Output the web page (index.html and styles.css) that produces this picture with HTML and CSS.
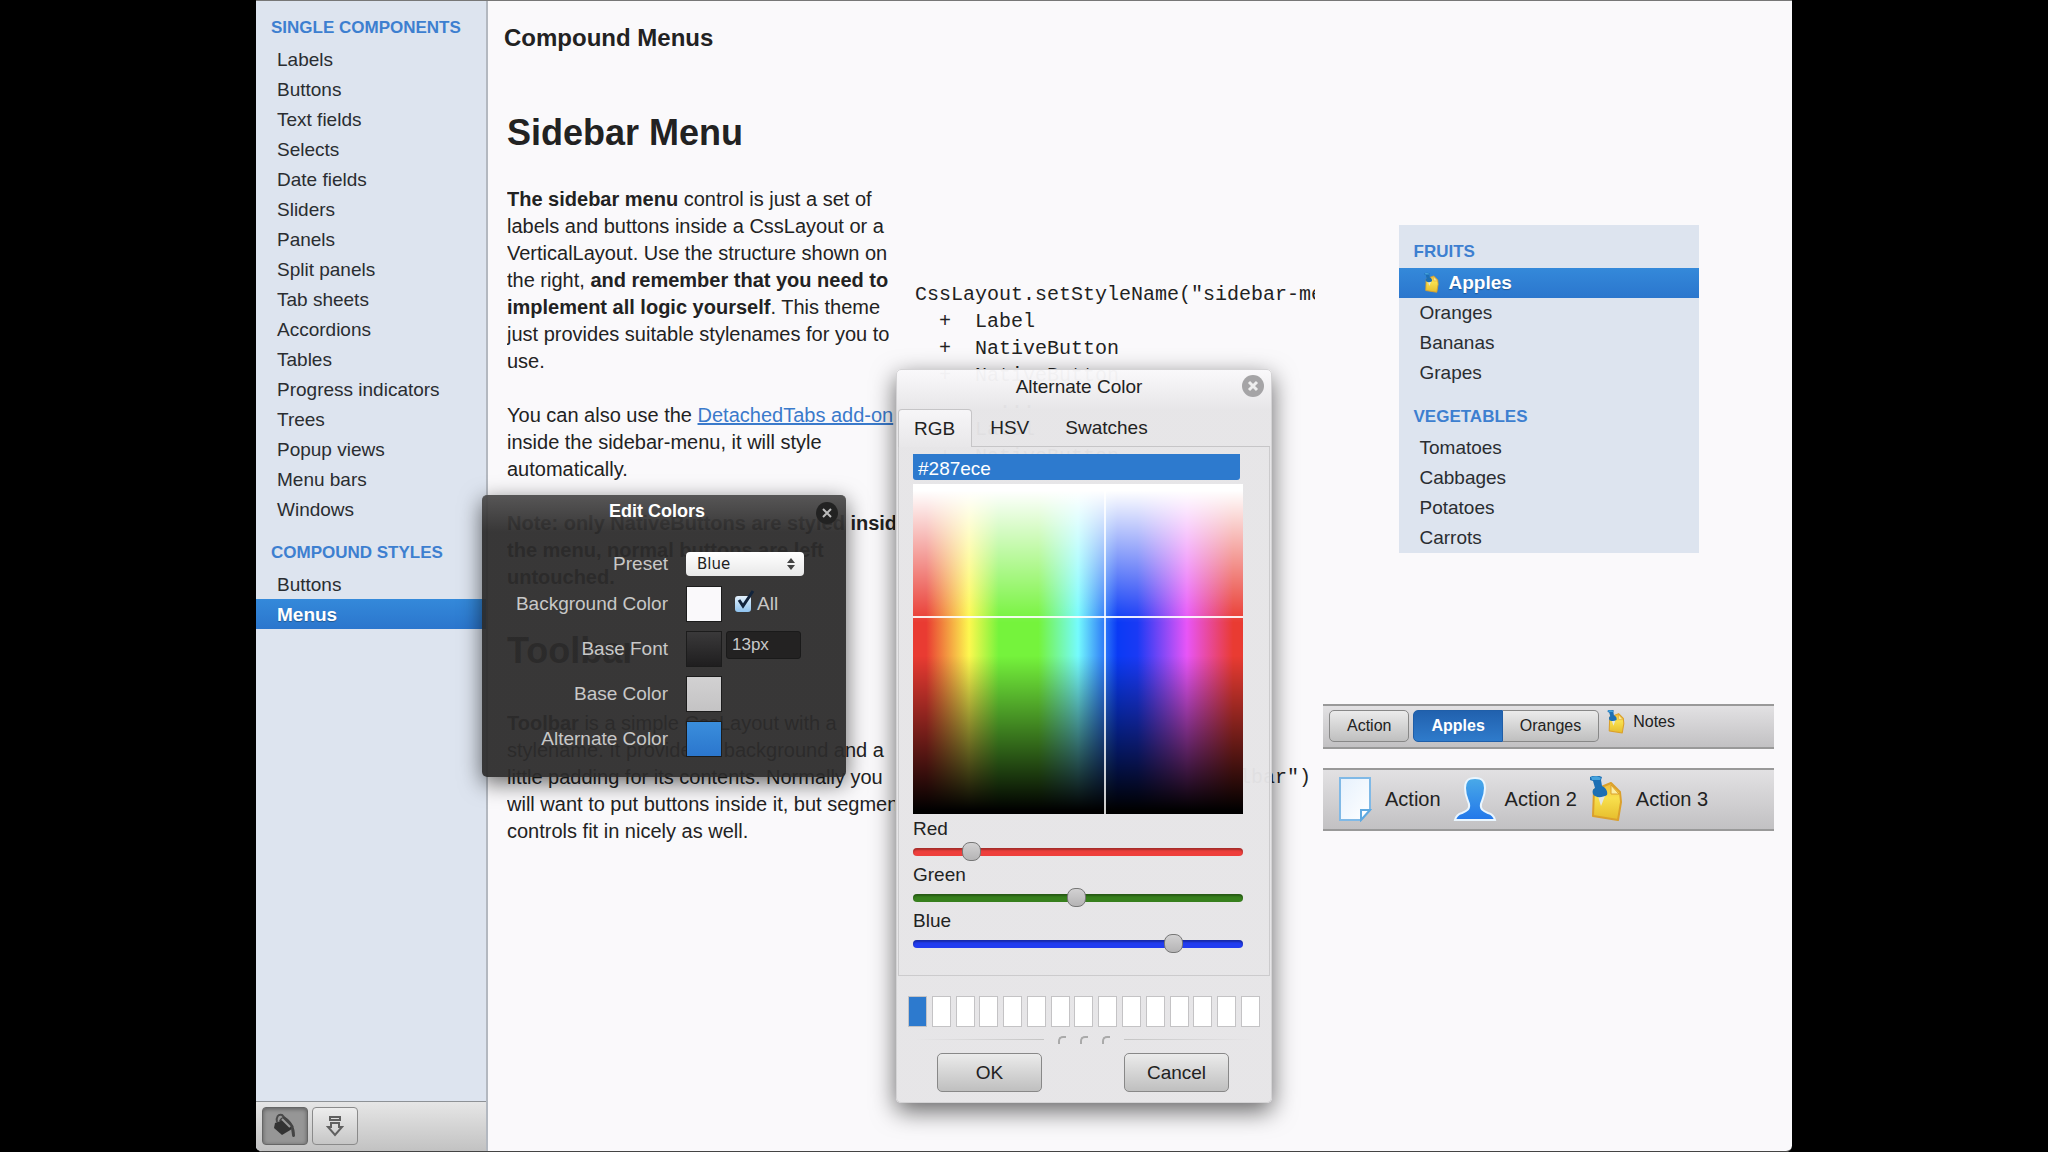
FILE: index.html
```html
<!DOCTYPE html>
<html lang="en">
<head>
    <meta charset="UTF-8">
    <meta name="viewport" content="width=device-width, initial-scale=1.0">
    <title>Compound Menus</title>
    <link rel="stylesheet" href="styles.css">
</head>
<body>

<!-- Shared icons -->
<svg class="defs" width="0" height="0" aria-hidden="true">
    <defs>
        <linearGradient id="gold" x1="0" y1="0" x2="0" y2="1">
            <stop offset="0" stop-color="#f0b93a"/>
            <stop offset="0.4" stop-color="#f8e04e"/>
            <stop offset="1" stop-color="#e6bd2c"/>
        </linearGradient>
        <linearGradient id="sky" x1="0" y1="0" x2="0" y2="1">
            <stop offset="0" stop-color="#4aaae8"/>
            <stop offset="1" stop-color="#2277ea"/>
        </linearGradient>
        <linearGradient id="paper" x1="0" y1="0" x2="1" y2="1">
            <stop offset="0" stop-color="#e6f1fd"/>
            <stop offset="1" stop-color="#ffffff"/>
        </linearGradient>
        <symbol id="note" viewBox="0 0 34 46">
            <path d="M5 14 L22 7 L31 16 L32 26 L29 44 L4 40 Z" fill="url(#gold)" stroke="#dba02c" stroke-width="2" stroke-linejoin="round"/>
            <path d="M22 9 L22 18 L30 18 Z" fill="#fbeea2" stroke="#dba02c"/>
            <path d="M8 17 L16 20 L12 30 Z" fill="#e4e6e2"/>
            <path d="M1 1 C5 -1 9 -1 13 1 L12 4 L13 10 C17 12 19 15 18 19 C13 22 6 22 4 18 C3 15 4 13 6 12 L4 5 L1 4 Z" fill="#1d6fb4"/>
            <path d="M2 1 C6 0 9 0 12 2 L11 4 L3 4 Z" fill="#45a2dc"/>
        </symbol>
    </defs>
</svg>

<div class="app">

    <aside class="sidebar">
        <nav class="sidebar-menu">
            <h4>SINGLE COMPONENTS</h4>
            <a href="#">Labels</a>
            <a href="#">Buttons</a>
            <a href="#">Text fields</a>
            <a href="#">Selects</a>
            <a href="#">Date fields</a>
            <a href="#">Sliders</a>
            <a href="#">Panels</a>
            <a href="#">Split panels</a>
            <a href="#">Tab sheets</a>
            <a href="#">Accordions</a>
            <a href="#">Tables</a>
            <a href="#">Progress indicators</a>
            <a href="#">Trees</a>
            <a href="#">Popup views</a>
            <a href="#">Menu bars</a>
            <a href="#">Windows</a>
            <h4>COMPOUND STYLES</h4>
            <a href="#">Buttons</a>
            <a href="#" class="selected">Menus</a>
        </nav>
        <div class="bottom-bar">
            <button type="button" class="icon-button pressed" aria-label="Edit colors">
                <svg width="24" height="26" viewBox="0 0 24 26">
                    <path d="M2 10 L13 6 L19 16 L9 22 L1 15 Z" fill="#333"/>
                    <path d="M4 9 C3 4 5 1 9 2 L20 14" fill="none" stroke="#4a4a4a" stroke-width="2"/>
                    <path d="M6 8 C8 3 12 3 15 6 C19 10 22 14 22 23 C21 25 19 24 19 22 L18 15 L12 8 Z" fill="#444"/>
                    <path d="M9 6 L17 14" stroke="#999" stroke-width="2"/>
                </svg>
            </button>
            <button type="button" class="icon-button" aria-label="Download">
                <svg width="18" height="22" viewBox="0 0 18 22" fill="none" stroke="#606060" stroke-width="2">
                    <rect x="4" y="2" width="10" height="3"/>
                    <path d="M5 8 H13 V12 H16 L9 20 L2 12 H5 Z"/>
                </svg>
            </button>
        </div>
    </aside>

    <main class="content">
        <h1>Compound Menus</h1>

        <h2>Sidebar Menu</h2>
        <div class="row">
            <div class="text">
                <b>The sidebar menu</b> control is just a set of<br>
                labels and buttons inside a CssLayout or a<br>
                VerticalLayout. Use the structure shown on<br>
                the right, <b>and remember that you need to<br>
                implement all logic yourself</b>. This theme<br>
                just provides suitable stylenames for you to<br>
                use.<br>
                <br>
                You can also use the <a href="#">DetachedTabs add-on</a><br>
                inside the sidebar-menu, it will style<br>
                automatically.<br>
                <br>
                <b>Note: only NativeButtons are styled inside<br>
                the menu, normal buttons are left<br>
                untouched.</b>
            </div>
<pre class="code">CssLayout.setStyleName("sidebar-menu")
  +  Label
  +  NativeButton
  +  NativeButton
       ...
  +  Label
  +  NativeButton
       ...</pre>
            <div class="demo">
                <nav class="sidebar-menu fruit-menu">
                    <h4>FRUITS</h4>
                    <a href="#" class="selected"><svg class="note-small" width="15" height="22"><use href="#note"/></svg>Apples</a>
                    <a href="#">Oranges</a>
                    <a href="#">Bananas</a>
                    <a href="#">Grapes</a>
                    <h4>VEGETABLES</h4>
                    <a href="#">Tomatoes</a>
                    <a href="#">Cabbages</a>
                    <a href="#">Potatoes</a>
                    <a href="#">Carrots</a>
                </nav>
            </div>
        </div>

        <h2>Toolbar</h2>
        <div class="row">
            <div class="text">
                <b>Toolbar</b> is a simple CssLayout with a<br>
                stylename. It provides a background and a<br>
                little padding for its contents. Normally you<br>
                will want to put buttons inside it, but segment<br>
                controls fit in nicely as well.
            </div>
<pre class="code">CssLayout.setStyleName("toolbar")</pre>
            <div class="toolbars">
                <div class="toolbar">
                    <button type="button" class="button">Action</button>
                    <div class="segment">
                        <button type="button" class="button down">Apples</button>
                        <button type="button" class="button">Oranges</button>
                    </div>
                    <button type="button" class="link-button">
                        <svg width="18" height="24"><use href="#note"/></svg>
                        Notes
                    </button>
                </div>
                <div class="toolbar big">
                    <button type="button" class="link-button">
                        <svg width="34" height="46" viewBox="0 0 34 46">
                            <path d="M2 2 H32 V34 L23 44 H2 Z" fill="url(#paper)" stroke="#80b9e6" stroke-width="2"/>
                            <path d="M23 44 V34 H32 Z" fill="#fff" stroke="#5fa9e0" stroke-width="2"/>
                        </svg>
                        Action
                    </button>
                    <button type="button" class="link-button">
                        <svg width="44" height="46" viewBox="0 0 44 46">
                            <path d="M22 2 C30 2 32 6 32 12 C32 20 29 24 28 28 C27 33 30 35 35 37 C39 38 41 40 42 44 H2 C3 40 5 38 9 37 C14 35 17 33 16 28 C15 24 12 20 12 12 C12 6 14 2 22 2 Z" fill="url(#sky)" stroke="#eaf6ff" stroke-width="2"/>
                        </svg>
                        Action 2
                    </button>
                    <button type="button" class="link-button">
                        <svg width="34" height="46"><use href="#note"/></svg>
                        Action 3
                    </button>
                </div>
            </div>
        </div>
    </main>

    <!-- Edit Colors window -->
    <form class="window dark">
        <h3>Edit Colors</h3>
        <button type="button" class="close" aria-label="Close">
            <svg width="12" height="12" viewBox="0 0 12 12"><path d="M2 2 L10 10 M10 2 L2 10" stroke="currentColor" stroke-width="2"/></svg>
        </button>
        <div class="fields">
            <label for="preset">Preset</label>
            <div class="field preset">
                <select id="preset">
                    <option>Blue</option>
                    <option>Red</option>
                    <option>Green</option>
                </select>
                <svg class="arrows" width="8" height="12" viewBox="0 0 8 12"><path d="M4 0 L8 5 H0 Z M4 12 L8 7 H0 Z" fill="#444"/></svg>
            </div>

            <label for="bgColor">Background Color</label>
            <div class="field">
                <button type="button" id="bgColor" class="swatch white"></button>
                <span class="check">
                    <input type="checkbox" id="all" checked>
                    <svg class="tick" width="20" height="20" viewBox="0 0 20 20"><path d="M4 10 L8 16 L18 1" fill="none" stroke="#12243c" stroke-width="3"/></svg>
                </span>
                <label for="all">All</label>
            </div>

            <label for="baseFont">Base Font</label>
            <div class="field">
                <button type="button" id="baseFont" class="swatch black"></button>
                <input type="text" class="size" value="13px" aria-label="Font size">
            </div>

            <label for="baseColor">Base Color</label>
            <div class="field"><button type="button" id="baseColor" class="swatch gray"></button></div>

            <label for="altColor">Alternate Color</label>
            <div class="field"><button type="button" id="altColor" class="swatch blue"></button></div>
        </div>
    </form>

    <!-- Color picker window -->
    <form class="window light">
        <h3>Alternate Color</h3>
        <button type="button" class="close" aria-label="Close">
            <svg width="12" height="12" viewBox="0 0 12 12"><path d="M2 2 L10 10 M10 2 L2 10" stroke="currentColor" stroke-width="3"/></svg>
        </button>
        <div class="tabs">
            <button type="button" class="tab active">RGB</button>
            <button type="button" class="tab">HSV</button>
            <button type="button" class="tab">Swatches</button>
        </div>
        <div class="picker">
            <input type="text" class="hex" value="#287ece" aria-label="Color value">
            <div class="spectrum">
                <div class="line-x"></div>
                <div class="line-y"></div>
            </div>
            <label for="red">Red</label>
            <input type="range" id="red" class="red" min="0" max="255" value="40">
            <label for="green">Green</label>
            <input type="range" id="green" class="green" min="0" max="255" value="126">
            <label for="blue">Blue</label>
            <input type="range" id="blue" class="blue" min="0" max="255" value="206">
        </div>
        <div class="history">
            <span class="used"></span><span></span><span></span><span></span><span></span>
            <span></span><span></span><span></span><span></span><span></span>
            <span></span><span></span><span></span><span></span><span></span>
        </div>
        <div class="grip"><i></i><i></i><i></i></div>
        <div class="actions">
            <button type="button" class="button">OK</button>
            <button type="button" class="button">Cancel</button>
        </div>
    </form>

</div>

</body>
</html>
```
FILE: styles.css
```css
* {
    box-sizing: border-box;
}

body {
    font-family: "Liberation Sans", Arial, sans-serif;
    font-size: 20px;
    line-height: 27px;
    color: #222;
    margin: 0;
    background-color: #000;
}

button, input, select {
    font-family: inherit;
    color: inherit;
    margin: 0;
}

.defs {
    position: absolute;
}

.app {
    position: relative;
    display: flex;
    width: 75%;
    height: 100vh;
    margin: 0 auto;
    background-color: #faf9fb;
    border-top: 1px solid #777;
    border-bottom: 1px solid #444;
    border-radius: 0 0 6px 6px;
    overflow: hidden;
}

/* Sidebar */
.sidebar {
    display: flex;
    flex-direction: column;
    justify-content: space-between;
    width: 232px;
    flex-shrink: 0;
    background-color: #dde4ef;
    border-right: 2px solid #b3b8c0;
}

.sidebar-menu h4 {
    margin: 0;
    padding: 15px 15px 2px;
    font-size: 17px;
    line-height: 28px;
    color: #3d7fd0;
}

.sidebar-menu h4:first-child {
    padding-top: 13px;
}

.sidebar-menu a {
    display: flex;
    align-items: center;
    height: 30px;
    padding: 0 21px;
    font-size: 19px;
    color: #2a2d31;
    text-decoration: none;
}

.sidebar-menu a.selected {
    font-weight: bold;
    color: #fff;
    background: linear-gradient(#3489da, #2b76cd);
    text-shadow: 0 1px 1px rgba(0, 0, 0, 0.3);
}

.bottom-bar {
    display: flex;
    gap: 4px;
    padding: 5px 6px 6px;
    border-top: 1px solid #8e9296;
    background: linear-gradient(#e6e6e6, #c2c2c2);
}

.icon-button {
    display: flex;
    align-items: center;
    justify-content: center;
    width: 46px;
    height: 38px;
    padding: 0;
    border: 1px solid #8a8a8a;
    border-radius: 4px;
    background: linear-gradient(#ededed, #c6c6c6);
}

.icon-button.pressed {
    border-color: #666;
    background: #969696;
    box-shadow: inset 0 1px 4px rgba(0, 0, 0, 0.4);
}

/* Content */
.content {
    flex: 1;
    min-width: 0;
    padding: 22px 18px 0 19px;
}

h1 {
    margin: 0 0 0 -3px;
    font-size: 24px;
    line-height: 30px;
}

h2 {
    margin: 0;
    font-size: 36px;
    line-height: 40px;
}

h1 + h2 {
    margin-top: 60px;
}

.row {
    display: grid;
    grid-template-columns: 400fr 400fr 451fr;
    gap: 8px;
    align-items: center;
    margin: 33px 0 40px;
}

.text {
    margin-right: 12px;
    white-space: nowrap;
    overflow: hidden;
}

.text a {
    color: #3a7acb;
}

.code {
    margin: 0;
    font-family: "Liberation Mono", "Courier New", monospace;
    overflow: hidden;
}

.fruit-menu {
    width: 300px;
    margin: 0 auto;
    background-color: #dde4ef;
}

.note-small {
    margin: 0 10px 0 4px;
}

.button {
    padding: 0;
    border: 1px solid #888;
    border-radius: 5px;
    background: linear-gradient(#ebebeb, #bfbfbf);
}

.toolbars {
    padding-bottom: 19px;
}

.toolbar {
    display: flex;
    align-items: flex-start;
    padding: 4px 6px 5px;
    border-top: 2px solid #999;
    border-bottom: 2px solid #999;
    background: linear-gradient(#e2e1e3, #c2c1c3);
    white-space: nowrap;
}

.toolbar .button {
    height: 32px;
    padding: 0 17px;
    font-size: 16px;
}

.segment {
    display: flex;
    margin: 0 8px 0 4px;
}

.segment .button:first-child {
    border-radius: 5px 0 0 5px;
}

.segment .button:last-child {
    border-left: none;
    border-radius: 0 5px 5px 0;
}

.segment .button.down {
    font-weight: bold;
    color: #fff;
    border-color: #1f5ea8;
    background: linear-gradient(#2161ae, #2f7bcb);
}

.link-button {
    display: flex;
    align-items: center;
    gap: 8px;
    padding: 0;
    border: none;
    background: none;
    font-size: 16px;
}

.toolbar.big {
    gap: 12px;
    margin-top: 19px;
    padding: 6px 15px 7px;
}

.big .link-button {
    font-size: 20px;
    gap: 13px;
}

.big .link-button:nth-child(2) {
    gap: 8px;
}

/* Floating windows */
.window {
    position: absolute;
    border-radius: 5px;
}

.window h3 {
    margin: 0;
    text-align: center;
}

.close {
    position: absolute;
    display: flex;
    align-items: center;
    justify-content: center;
    width: 22px;
    height: 22px;
    padding: 0;
    border: none;
    border-radius: 50%;
}

.dark {
    top: 494px;
    left: 226px;
    width: 364px;
    height: 282px;
    color: #c8c8c8;
    background: linear-gradient(rgba(76, 75, 75, 0.94), rgba(44, 43, 43, 0.94) 36px);
    border-top: 1px solid #555;
    box-shadow: 0 6px 22px rgba(0, 0, 0, 0.6);
}

.dark h3 {
    padding: 2px 14px 0 0;
    font-size: 18px;
    color: #fff;
}

.dark .close {
    top: 6px;
    right: 8px;
    color: #bbb;
    background-color: #222;
}

.fields {
    display: grid;
    grid-template-columns: 186px 1fr;
    column-gap: 18px;
    grid-template-rows: 35px 45px 45px 45px 45px;
    align-items: center;
    margin-top: 21px;
    font-size: 19px;
}

.fields > label {
    text-align: right;
}

.field {
    display: flex;
    align-items: center;
}

.preset {
    position: relative;
    width: 118px;
}

.preset select {
    width: 118px;
    height: 24px;
    padding: 0 11px;
    border: none;
    border-radius: 4px;
    font-family: "DejaVu Sans", sans-serif;
    font-size: 15px;
    color: #222;
    background: linear-gradient(#fff, #e8e8e8);
    appearance: none;
}

.arrows {
    position: absolute;
    top: 6px;
    right: 9px;
    pointer-events: none;
}

.swatch {
    width: 36px;
    height: 36px;
    padding: 0;
    border: 1px solid #1c1c1c;
}

.swatch.white { background: #faf9fb; }
.swatch.black { background: linear-gradient(#3a393a, #1f1e1f); }
.swatch.gray { background: linear-gradient(#d2d1d2, #c4c3c4); }
.swatch.blue { background: linear-gradient(#3a8edc, #2b76cd); }

.check {
    position: relative;
    display: flex;
    margin: 0 6px 0 13px;
}

.check input {
    width: 16px;
    height: 16px;
    border-radius: 3px;
    background: linear-gradient(#e4f1fc, #8fc3ef);
    appearance: none;
}

.tick {
    position: absolute;
    left: 0;
    bottom: 2px;
    pointer-events: none;
}

.size {
    align-self: flex-start;
    width: 75px;
    height: 28px;
    margin-left: 4px;
    padding: 0 5px;
    font-size: 17px;
    border: 1px solid #1a1a1a;
    border-radius: 3px;
    background-color: #232222;
}

.light {
    top: 368px;
    left: 640px;
    width: 376px;
    font-size: 19px;
    background: linear-gradient(rgba(250, 249, 251, 0.97), rgba(230, 229, 231, 0.97) 40px);
    border: 1px solid #d4d3d5;
    box-shadow: 0 8px 24px rgba(0, 0, 0, 0.6);
}

.light h3 {
    padding: 3px 10px 0 0;
    font-size: 19px;
    font-weight: normal;
}

.light .close {
    top: 5px;
    right: 7px;
    color: #eee;
    background-color: #a5a4a6;
}

.tabs {
    display: flex;
    height: 38px;
    margin: 9px 1px 0;
    border-bottom: 1px solid #c6c5c7;
}

.tab {
    height: 38px;
    padding: 0 18px;
    border: none;
    background: none;
    font-size: 19px;
}

.tab.active {
    padding: 0 16px 0 15px;
    border: 1px solid #c6c5c7;
    border-bottom: none;
    border-radius: 4px 4px 0 0;
    background: linear-gradient(#f7f6f8, #e8e7e9);
}

.picker {
    display: flex;
    flex-direction: column;
    margin: 0 1px;
    padding: 7px 26px 22px 14px;
    border: 1px solid #cccbcd;
    border-top: none;
}

.hex {
    height: 26px;
    margin-right: 3px;
    padding: 4px 5px 0;
    border: none;
    border-radius: 0 0 3px 3px;
    font-size: 19px;
    color: #fff;
    background-color: #2d7ace;
}

.spectrum {
    position: relative;
    height: 330px;
    margin: 4px 0 1px;
    background:
        linear-gradient(#fff 2%, rgba(255, 255, 255, 0) 42%),
        linear-gradient(rgba(0, 0, 0, 0) 52%, #000 99%),
        linear-gradient(90deg, #e93b32 4%, #fdf84f 17%, #75f33c 26%, #75f33c 38%, #75fbfd 50%, #0a3af5 62%, #1a3af5 68%, #e855f7 83%, #e93b32 97%);
}

/* crosshair over the chosen color */
.line-x, .line-y {
    position: absolute;
    background-color: #fff;
}

.line-x {
    top: 40%;
    left: 0;
    width: 100%;
    height: 2px;
    opacity: 0.9;
}

.line-y {
    top: 0;
    left: 58%;
    width: 2px;
    height: 100%;
    opacity: 0.8;
}

input[type="range"] {
    width: 100%;
    height: 19px;
    background: none;
    appearance: none;
}

input[type="range"]::-webkit-slider-runnable-track {
    height: 8px;
    border-radius: 4px;
    background-color: var(--track);
    box-shadow: inset 0 2px 2px rgba(0, 0, 0, 0.3);
}

input[type="range"]::-webkit-slider-thumb {
    width: 19px;
    height: 19px;
    margin-top: -6px;
    border: 1px solid #777;
    border-radius: 8px;
    background: linear-gradient(#d2d1d2, #b5b4b5);
    appearance: none;
}

.red { --track: #ee3f3c; }
.green { --track: #37801d; }
.blue { --track: #213cf0; }

.history {
    display: flex;
    justify-content: space-between;
    margin: 20px 11px 0;
}

.history span {
    width: 19px;
    height: 31px;
    border: 1px solid #c4c3c5;
    background-color: #fff;
}

.history .used {
    background-color: #2d7ace;
}

.grip {
    display: flex;
    align-items: center;
    gap: 14px;
    height: 25px;
    padding: 0 18px;
}

.grip::before, .grip::after {
    content: "";
    flex: 1;
    height: 1px;
    background: linear-gradient(90deg, rgba(190, 190, 190, 0), #c4c4c4);
}

.grip::after {
    background: linear-gradient(90deg, #c4c4c4, rgba(190, 190, 190, 0));
}

.grip i {
    width: 8px;
    height: 8px;
    border-top: 2px solid #aaa;
    border-left: 2px solid #aaa;
    border-radius: 5px 0 0 0;
}

.actions {
    display: flex;
    justify-content: space-between;
    padding: 1px 42px 10px 40px;
}

.actions .button {
    width: 105px;
    height: 39px;
    font-size: 19px;
}
```
